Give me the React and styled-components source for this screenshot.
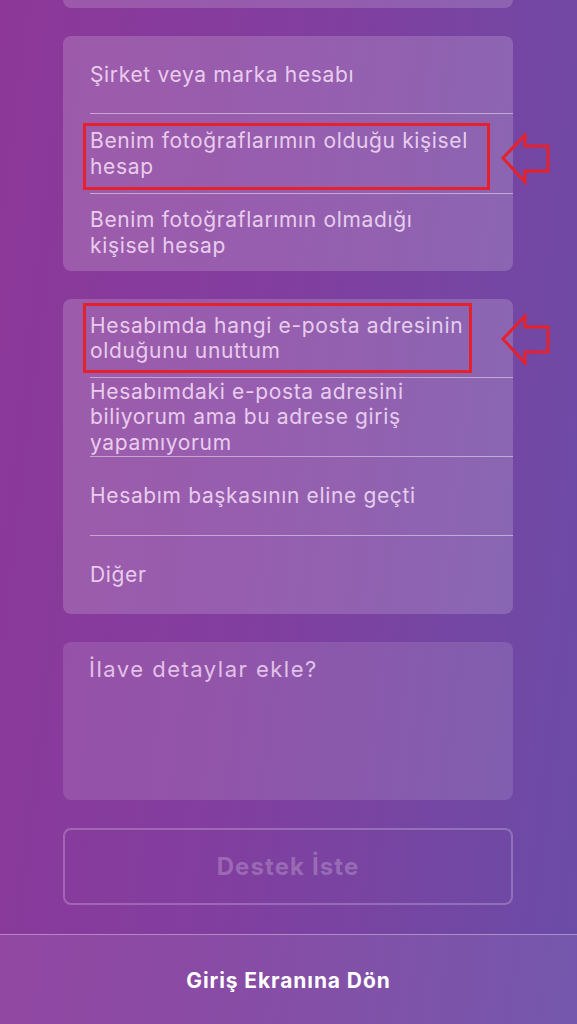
import React from 'react';
import styled, { createGlobalStyle } from 'styled-components';

const GlobalStyle = createGlobalStyle`
  html, body {
    margin: 0;
    padding: 0;
  }
  body {
    font-family: Inter, Roboto, "Noto Sans", "Liberation Sans", sans-serif;
    -webkit-font-smoothing: antialiased;
  }
`;

const accountTypes = [
  ['Şirket veya marka hesabı'],
  ['Benim fotoğraflarımın olduğu kişisel', 'hesap'],
  ['Benim fotoğraflarımın olmadığı', 'kişisel hesap'],
];

const problems = [
  ['Hesabımda hangi e-posta adresinin', 'olduğunu unuttum'],
  ['Hesabımdaki e-posta adresini', 'biliyorum ama bu adrese giriş', 'yapamıyorum'],
  ['Hesabım başkasının eline geçti'],
  ['Diğer'],
];

function ArrowMark({ top }) {
  return (
    <Arrow style={{ top }} width="50" height="52" viewBox="0 0 50 52">
      <path
        d="M3 25 L25 2 L25 13 L48 13 L48 38 L25 38 L25 49 Z"
        fill="none"
        stroke="#e5212c"
        strokeWidth="3"
        strokeLinejoin="miter"
      />
    </Arrow>
  );
}

function Option({ lines, mark, last, height }) {
  return (
    <Row last={last} height={height}>
      <Label>
        {lines.map((line, i) => (
          <React.Fragment key={i}>
            {i > 0 && <br />}
            {line}
          </React.Fragment>
        ))}
      </Label>
      {mark && <Highlight style={mark.box} />}
      {mark && <ArrowMark top={mark.arrowTop} />}
    </Row>
  );
}

function App() {
  return (
    <Page>
      <GlobalStyle />
      <Content>
        <StubCard />
        <Card>
          {accountTypes.map((lines, i) => (
            <Option
              key={i}
              lines={lines}
              height={i === 1 ? 79 : 77}
              last={i === accountTypes.length - 1}
              mark={
                i === 1
                  ? { box: { top: 9, bottom: 3, right: 23 }, arrowTop: 19 }
                  : null
              }
            />
          ))}
        </Card>
        <Card>
          {problems.map((lines, i) => (
            <Option
              key={i}
              lines={lines}
              height={78}
              last={i === problems.length - 1}
              mark={
                i === 0
                  ? { box: { top: 4, bottom: 4, right: 41 }, arrowTop: 15 }
                  : null
              }
            />
          ))}
        </Card>
        <Details placeholder="İlave detaylar ekle?" />
        <SubmitButton disabled>Destek İste</SubmitButton>
      </Content>
      <Footer>
        <FooterLink>Giriş Ekranına Dön</FooterLink>
      </Footer>
    </Page>
  );
}

const Page = styled.div`
  min-height: 1024px;
  display: flex;
  flex-direction: column;
  background: linear-gradient(97deg, #8d3899 0%, #823e9f 45%, #7546a3 75%, #6a4ca7 100%);
  overflow: hidden;
`;

const Content = styled.div`
  display: flex;
  flex-direction: column;
  gap: 28px;
  padding: 0 64px 29px 63px;
  flex: 1;
`;

const StubCard = styled.div`
  height: 8px;
  background: rgba(255, 255, 255, 0.16);
  border-radius: 0 0 8px 8px;
`;

const Card = styled.div`
  position: relative;
  display: flex;
  flex-direction: column;
  background: rgba(255, 255, 255, 0.17);
  border-radius: 8px;
`;

const Row = styled.div`
  position: relative;
  display: flex;
  align-items: center;
  min-height: ${props => props.height}px;
  margin-left: 27px;
  padding-right: 20px;
  border-bottom: ${props => (props.last ? 'none' : '1px solid rgba(255, 255, 255, 0.45)')};
`;

const Label = styled.div`
  font-size: 21px;
  line-height: 25.5px;
  color: rgba(255, 235, 255, 0.8);
  letter-spacing: 0.65px;
  white-space: nowrap;
`;

const Highlight = styled.div`
  position: absolute;
  left: -7px;
  border: 3px solid #e5212c;
  pointer-events: none;
`;

const Arrow = styled.svg`
  position: absolute;
  right: -37px;
  pointer-events: none;
`;

const Details = styled.textarea`
  height: 158px;
  box-sizing: border-box;
  padding: 15px 26px;
  border: none;
  border-radius: 8px;
  resize: none;
  background: rgba(255, 255, 255, 0.12);
  font-family: Inter, Roboto, "Noto Sans", "Liberation Sans", sans-serif;
  font-size: 22px;
  line-height: 25px;
  letter-spacing: 1.5px;
  color: white;
  outline: none;

  &::placeholder {
    color: rgba(255, 230, 255, 0.75);
  }
`;

const SubmitButton = styled.button`
  height: 77px;
  border: 2px solid rgba(255, 255, 255, 0.22);
  border-radius: 8px;
  background: transparent;
  font-family: Inter, Roboto, "Noto Sans", "Liberation Sans", sans-serif;
  font-size: 24px;
  font-weight: 700;
  letter-spacing: 1.1px;
  color: rgba(255, 255, 255, 0.22);
`;

const Footer = styled.div`
  height: 91px;
  display: flex;
  align-items: center;
  justify-content: center;
  border-top: 1px solid rgba(255, 255, 255, 0.35);
  background: rgba(255, 255, 255, 0.07);
`;

const FooterLink = styled.span`
  font-size: 21px;
  font-weight: 700;
  letter-spacing: 0.9px;
  color: #fff;
`;

export default App;
